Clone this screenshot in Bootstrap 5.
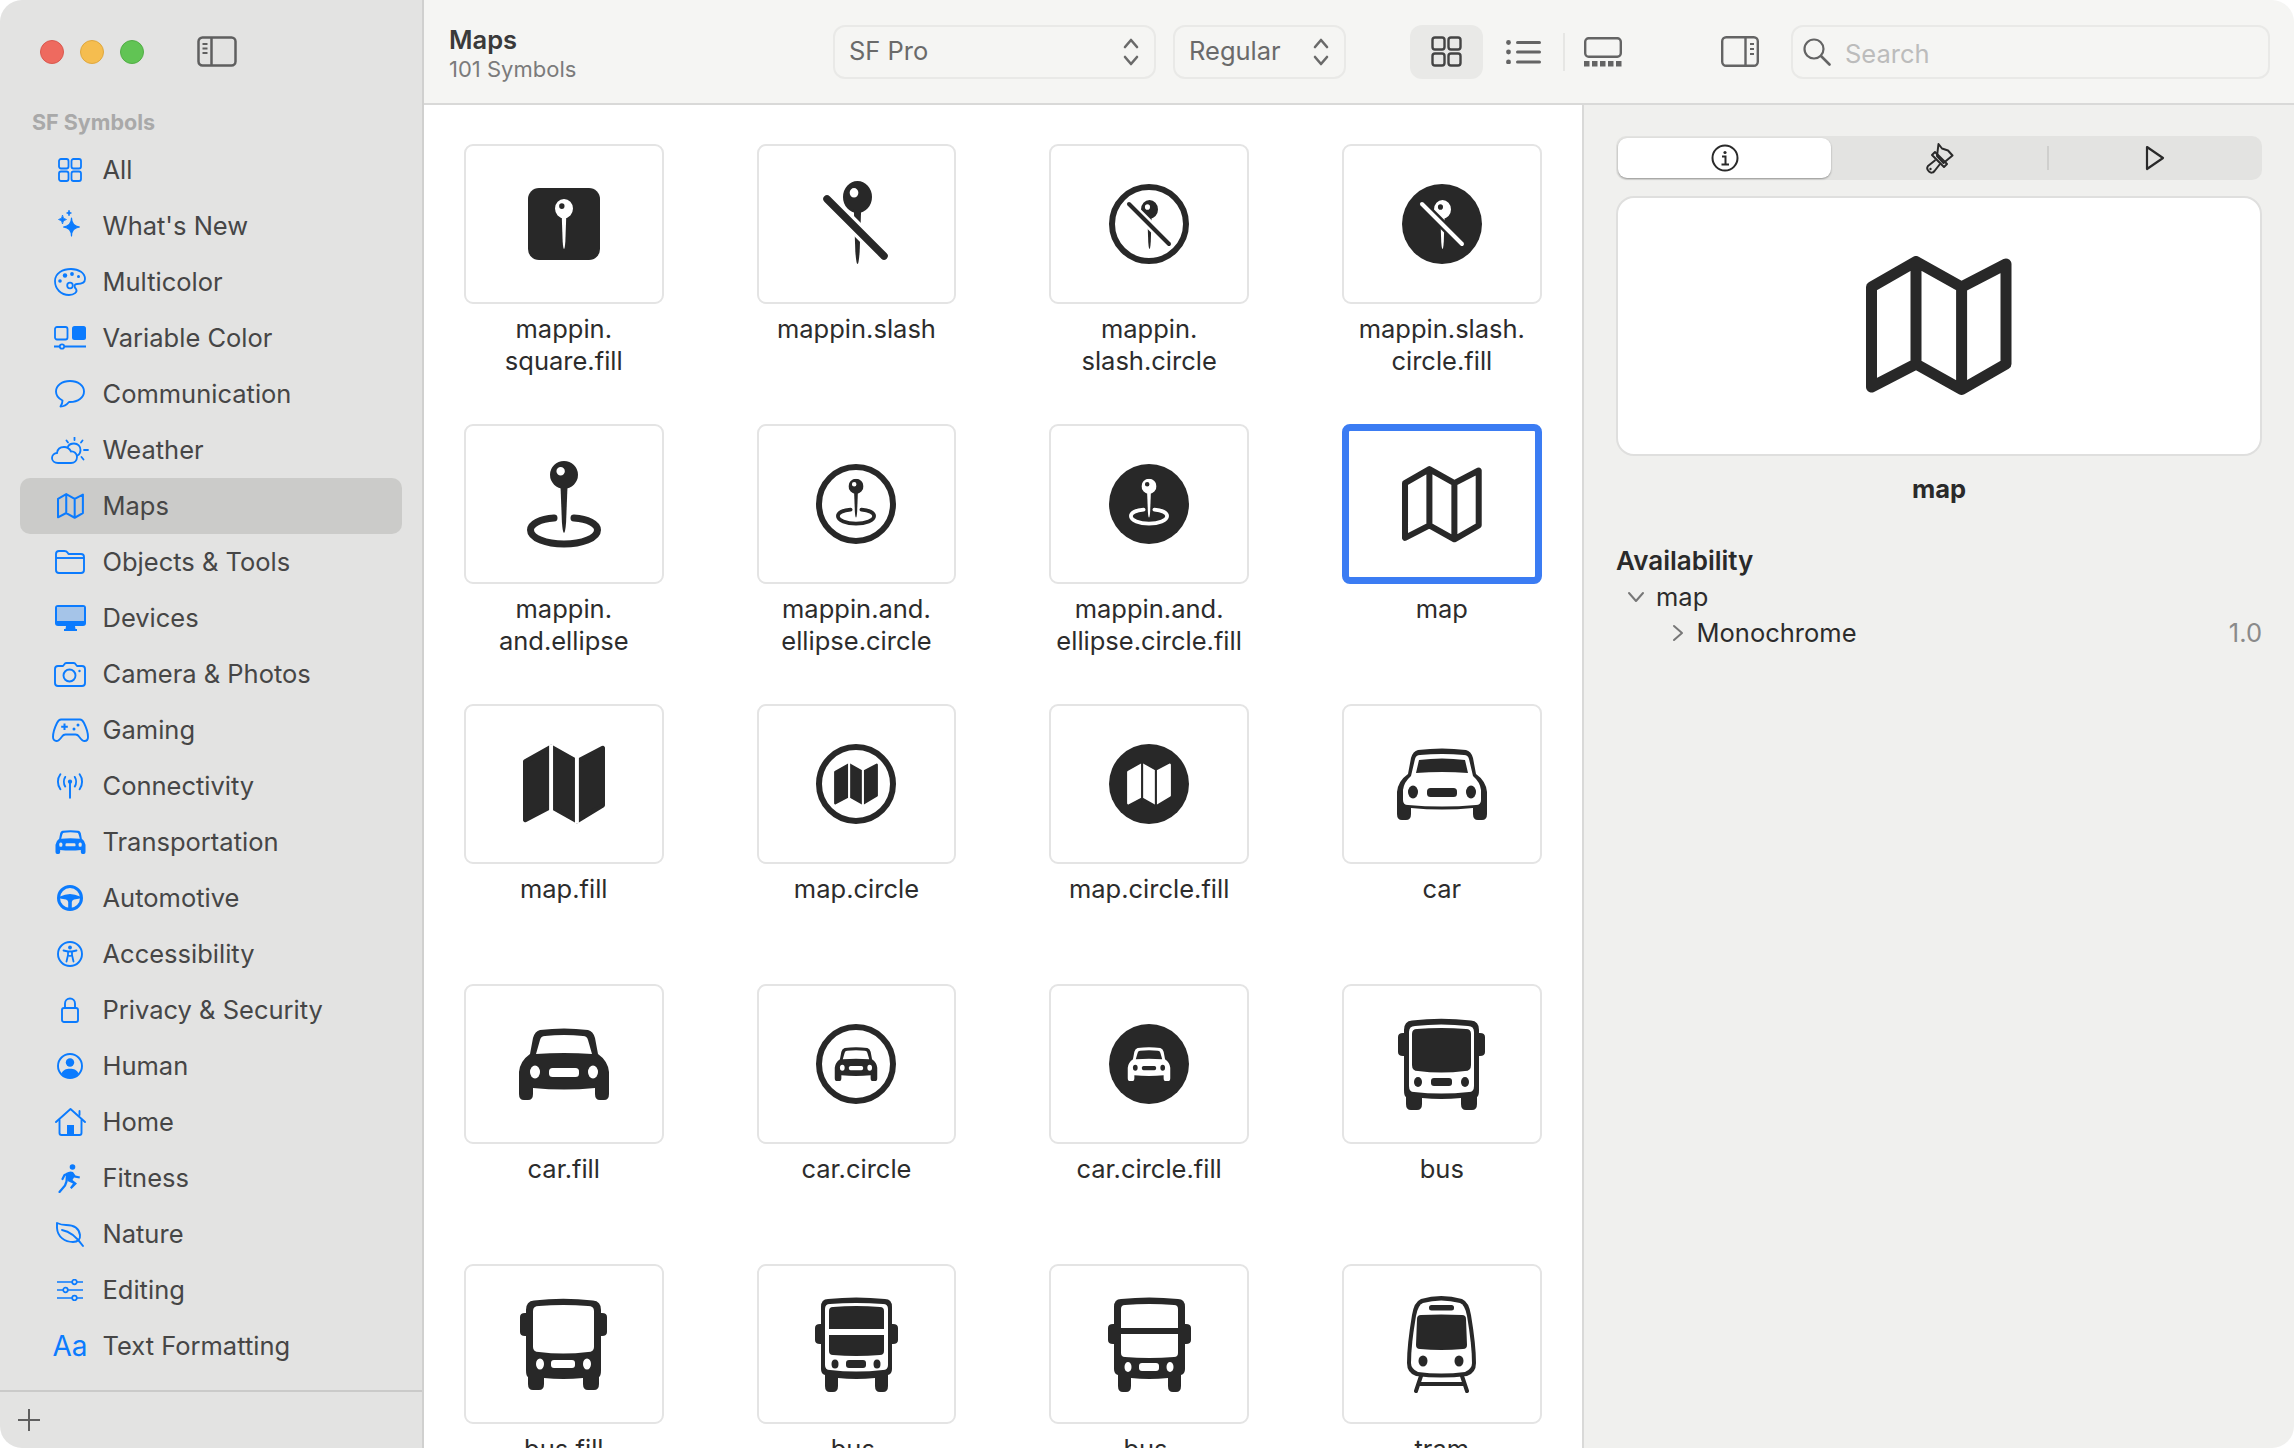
<!DOCTYPE html>
<html lang="en">

<head>
    <meta charset="UTF-8">
    <meta name="viewport" content="width=device-width, initial-scale=1.0">
    <title>SF Symbols</title>
    <!-- Bootstrap CSS -->
    <link href="https://cdn.jsdelivr.net/npm/bootstrap@5.3.0/dist/css/bootstrap.min.css" rel="stylesheet">
    <style>
        html, body { height: 100%; overflow: hidden; background: #fff; }
        body { font-family: Inter, "Liberation Sans", sans-serif; color: #2c2c2c; }
        svg { display: block; flex: none; }

        .app { height: 1448px; border-radius: 22px; overflow: hidden; background: #fff; }

        /* sidebar */
        .side { width: 424px; flex: none; background: #e3e3e2; border-right: 2px solid #d0d0cf; --gap: #e3e3e2; }
        .traffic { height: 104px; padding-left: 40px; gap: 16px; }
        .dot { width: 24px; height: 24px; border-radius: 50%; }
        .dot-r { background: #ee6a5f; border: 1px solid #d9594f; }
        .dot-y { background: #f5bd4f; border: 1px solid #dfa83f; }
        .dot-g { background: #61c454; border: 1px solid #52ae46; }
        .toggle-side { margin-left: 37px; color: #5f5f5f; }
        .side-title { font-size: 21.5px; font-weight: 700; color: #a9a9a9; line-height: 28px; margin: 4px 0 6px 32px; height: 28px; }
        .side .nav-link { display: flex; align-items: center; height: 56px; margin: 0 20px 0 20px; padding: 0 0 0 32px; font-size: 25.5px; color: #464646; border-radius: 10px; }
        .side .nav-link.active { background: #cbcbc9; }
        .side-ic { width: 36px; height: 32px; margin-right: 14.500px; color: #0b7bfe; flex: none; display: flex; align-items: center; justify-content: center; }
        .aa { font-size: 28px; line-height: 32px; }
        .side-foot { height: 58px; border-top: 2px solid #cacac9; padding-left: 18px; color: #5f5f5f; }

        /* toolbar */
        .toolbar { height: 105px; background: #f5f5f3; border-bottom: 2px solid #d9d9d8; padding: 0 25px 0 25px; }
        .tb-title { width: 384px; padding-top: 4px; }
        .tb-title b { display: block; font-size: 25.5px; line-height: 32px; font-weight: 600; color: #3a3a3a; }
        .tb-title span { display: block; font-size: 22px; line-height: 27px; color: #7b7b7b; }
        .picker { height: 54px; border: 2px solid #e9e9e7; border-radius: 12px; padding: 0 14px 0 14px; font-size: 25.5px; color: #6a6a6a; }
        .picker-font { width: 323px; }
        .picker-weight { width: 173px; margin-left: 17px; }
        .tb-view { width: 73px; height: 54px; border-radius: 12px; color: #555; }
        .tb-view.active { background: #e9e9e7; color: #444; }
        .tb-view.wide { width: 80px; }
        .tb-views { margin-left: 64px; }
        .tb-divider { width: 2px; height: 38px; background: #e6e6e4; }
        .tb-gallery { margin-left: 19px; }
        .tb-inspector { margin-left: 99px; }
        .search { height: 54px; width: 479px; margin-left: 32px; border: 2px solid #e9e9e7; border-radius: 12px; padding-left: 10px; font-size: 25.5px; color: #bcbcbc; }
        .search span { padding-top: 5px; margin-left: 14px; }
        .icon-gray { color: #646464; }

        /* symbols grid */
        .grid-wrap { width: 1158px; flex: none; background: #fff; overflow: hidden; padding: 39px 0 0 40px; }
        .sym-grid { display: grid; grid-template-columns: repeat(4, 199.500px); grid-auto-rows: 280px; column-gap: 93.200px; }
        .sym-card { height: 160px; border: 2px solid #e4e4e4; border-radius: 9px; align-items: center; justify-content: center; --gap: #fff; color: #282828; }
        .sym-card.selected { border: 7px solid #3b7cf3; border-radius: 8px; }
        .invert { color: #fff; --gap: #282828; }
        .sym-label { margin-top: 9px; font-size: 25.5px; line-height: 32px; text-align: center; color: #2c2c2c; }

        /* inspector */
        .inspector { flex: 1; background: #f0f0ee; border-left: 2px solid #d9d9d8; padding: 31px 33px 0 32px; --gap: #fff; }
        .segment { height: 44px; background: #e3e3e1; border-radius: 10px; border: 0; }
        .seg-btn { flex: 1; display: flex; align-items: center; justify-content: center; color: #2a2a2a; border-radius: 9px; position: relative; }
        .seg-btn.active { background: #fff; margin: 2px; box-shadow: 0 1px 2px rgba(0,0,0,.35); }
        .seg-sep { width: 2px; height: 24px; background: #cfcfcd; align-self: center; }
        .preview { height: 260px; margin-top: 16px; background: #fff; border: 2px solid #dfdfde; border-radius: 18px; align-items: center; justify-content: center; color: #282828; }
        .preview-name { margin: 17px 0 0; font-size: 25.5px; line-height: 32px; font-weight: 700; text-align: center; color: #2a2a2a; }
        .avail-head { margin: 40px 0 2px; font-size: 26px; line-height: 32px; font-weight: 600; color: #2a2a2a; }
        .tree-row { height: 36px; font-size: 25.5px; color: #2c2c2c; }
        .tree-map { padding-left: 11px; }
        .tree-mono { padding-left: 56px; }
        .tree-chev { width: 29px; flex: none; color: #777; }
        .tree-mono .tree-chev { width: 24.500px; }
        .version { color: #8a8a8a; }
    </style>
</head>

<body class="m-0">
    <!-- shared symbols -->
    <svg width="0" height="0" class="position-absolute">
        <defs>
            <symbol id="pin" viewBox="0 0 20 52" preserveAspectRatio="none">
                <path fill="currentColor" fill-rule="evenodd" d="M10 0a10 10 0 1 1 0 20a10 10 0 1 1 0-20zM7.600 4.400a3 3 0 1 0 0 6a3 3 0 1 0 0-6z"/>
                <path fill="currentColor" d="M7.500 18h5L11.500 44q-.6 8-1.500 8t-1.500-8z"/>
            </symbol>
            <symbol id="pinell" viewBox="0 0 100 100">
                <path fill="none" stroke="currentColor" stroke-width="7" stroke-linecap="round" d="M40 64C26 65 16.500 70 16.500 76C16.500 84 32 90 50 90S83.500 84 83.500 76C83.500 70 74 65 60 64"/>
                <use href="#pin" x="36" y="7" width="28" height="72"/>
            </symbol>
            <symbol id="map" viewBox="0 0 146 140">
                <path fill="none" stroke="currentColor" stroke-width="11" stroke-linejoin="round" d="M5.500 31L50 5.500L95.600 31L140 8V108L95.600 133.500L50 108L5.500 131ZM50 5.500V108M95.600 31V133.500"/>
            </symbol>
            <symbol id="mapf" viewBox="0 0 146 140">
                <path fill="currentColor" stroke="currentColor" stroke-width="8" stroke-linejoin="round" d="M4 30L50 4L96 30L142 6V108L96 136L50 110L4 134Z"/>
                <path stroke="var(--gap)" stroke-width="7" d="M50 0V140M96 0V140"/>
            </symbol>
            <symbol id="car" viewBox="0 0 92 72">
                <path fill="currentColor" d="M22 2Q46-1 70 2Q75 3 77 10L80 26Q90 33 91 44V66Q91 72 86 72H82Q77 72 77 66V60Q46 63 15 60V66Q15 72 10 72H6Q1 72 1 66V44Q2 33 12 26L15 10Q17 3 22 2Z"/>
                <path fill="var(--gap)" d="M7 42Q8 34 15 28L19 11Q20 7 24 7Q46 5 68 7Q72 7 73 11L77 28Q84 34 85 42V52Q85 57 80 57Q46 60 12 57Q7 57 7 52Z"/>
                <path fill="currentColor" d="M20 25L23 12Q46 9 69 12L72 25Q46 23 20 25Z"/>
                <ellipse fill="currentColor" cx="17" cy="44" rx="5" ry="6.500"/><ellipse fill="currentColor" cx="75" cy="44" rx="5" ry="6.500"/>
                <rect fill="currentColor" x="31" y="40" width="30" height="9" rx="3.500"/>
            </symbol>
            <symbol id="carf" viewBox="0 0 92 72">
                <path fill="currentColor" d="M22 2Q46-1 70 2Q75 3 77 10L80 26Q90 33 91 44V66Q91 72 86 72H82Q77 72 77 66V60Q46 63 15 60V66Q15 72 10 72H6Q1 72 1 66V44Q2 33 12 26L15 10Q17 3 22 2Z"/>
                <path fill="var(--gap)" d="M18 26L22 12Q23 8 27 8Q46 6 65 8Q69 8 70 12L74 26Q46 24 18 26Z"/>
                <ellipse fill="var(--gap)" cx="17" cy="44" rx="5" ry="6.500"/><ellipse fill="var(--gap)" cx="75" cy="44" rx="5" ry="6.500"/>
                <rect fill="var(--gap)" x="31" y="40" width="30" height="9" rx="3.500"/>
            </symbol>
            <symbol id="busbody" viewBox="0 0 87 92">
                <path fill="currentColor" d="M6 12Q6 3 14 2.500Q43-1 73 2.500Q81 3 81 12V15H82Q87 15 87 19V34Q87 38 82 38H81V72Q81 78 79 79V86Q79 92 74 92H68Q63 92 63 86V80Q43 82 24 80V86Q24 92 19 92H13Q8 92 8 86V79Q6 78 6 72V38H5Q0 38 0 34V19Q0 15 5 15H6Z"/>
            </symbol>
            <symbol id="bus" viewBox="0 0 87 92">
                <use href="#busbody" width="87" height="92"/>
                <path fill="var(--gap)" d="M11 14Q11 8 17 8Q43 5 70 8Q76 8 76 14V68Q76 74 71 74Q43 77 16 74Q11 74 11 68Z"/>
                <path fill="currentColor" d="M14 16Q14 11 19 11Q43 9 68 11Q73 11 73 16V47Q73 53 67 53Q43 56 20 53Q14 53 14 47Z"/>
                <ellipse fill="currentColor" cx="20" cy="64" rx="4" ry="5"/><ellipse fill="currentColor" cx="67" cy="64" rx="4" ry="5"/>
                <rect fill="currentColor" x="33" y="60" width="21" height="8" rx="3"/>
            </symbol>
            <symbol id="busf" viewBox="0 0 87 92">
                <use href="#busbody" width="87" height="92"/>
                <path fill="var(--gap)" d="M13 13Q13 8 19 8Q43 6 68 8Q74 8 74 13V49Q74 54 68 54Q43 57 19 54Q13 54 13 49Z"/>
                <ellipse fill="var(--gap)" cx="20" cy="66" rx="4" ry="5.500"/><ellipse fill="var(--gap)" cx="67" cy="66" rx="4" ry="5.500"/>
                <rect fill="var(--gap)" x="31" y="62" width="24" height="8" rx="3"/>
            </symbol>
            <symbol id="deck" viewBox="0 0 83 95">
                <path fill="currentColor" d="M6 10Q6 2 13 2Q41-1 70 2Q77 2 77 10V27H78Q83 27 83 31V43Q83 47 78 47H77V72Q77 77 73 78V89Q73 95 68 95H65Q60 95 60 89V81Q41 83 23 81V89Q23 95 18 95H15Q10 95 10 89V78Q6 77 6 72V47H5Q0 47 0 43V31Q0 27 5 27H6Z"/>
                <path fill="var(--gap)" d="M10 12Q10 7 15 7Q41 5 68 7Q73 7 73 12V68Q73 73 68 73Q41 76 15 73Q10 73 10 68Z"/>
                <path fill="currentColor" d="M14 14Q14 10 18 10Q41 8 65 10Q69 10 69 14V32H14ZM14 38H69V54Q69 58 65 58Q41 60 18 58Q14 58 14 54Z"/>
                <ellipse fill="currentColor" cx="20" cy="67" rx="3.500" ry="4.500"/><ellipse fill="currentColor" cx="62" cy="67" rx="3.500" ry="4.500"/>
                <rect fill="currentColor" x="31" y="63" width="20" height="8" rx="3"/>
            </symbol>
            <symbol id="deckf" viewBox="0 0 83 95">
                <path fill="currentColor" d="M6 10Q6 2 13 2Q41-1 70 2Q77 2 77 10V27H78Q83 27 83 31V43Q83 47 78 47H77V72Q77 77 73 78V89Q73 95 68 95H65Q60 95 60 89V81Q41 83 23 81V89Q23 95 18 95H15Q10 95 10 89V78Q6 77 6 72V47H5Q0 47 0 43V31Q0 27 5 27H6Z"/>
                <path fill="var(--gap)" d="M13 12Q13 8 17 8Q41 6 66 8Q70 8 70 12V31H13ZM13 37H70V56Q70 60 66 60Q41 62 17 60Q13 60 13 56Z"/>
                <ellipse fill="var(--gap)" cx="20" cy="70" rx="3.500" ry="5"/><ellipse fill="var(--gap)" cx="62" cy="70" rx="3.500" ry="5"/>
                <rect fill="var(--gap)" x="31" y="66" width="20" height="8" rx="3"/>
            </symbol>
            <symbol id="tram" viewBox="0 0 69 98">
                <path stroke="currentColor" stroke-width="4" stroke-linecap="round" fill="none" d="M15 78L9 96M54 78L60 96M13 89H56"/>
                <path fill="currentColor" d="M14 4Q34-2 55 4Q62 7 64 20Q69 50 69 68Q69 78 60 81Q34 84 9 81Q0 78 0 68Q0 50 5 20Q7 7 14 4Z"/>
                <path fill="var(--gap)" d="M16 8Q34 3 53 8Q58 10 60 21Q65 50 65 68Q65 74 58 77Q34 80 11 77Q4 74 4 68Q4 50 9 21Q11 10 16 8Z"/>
                <rect fill="currentColor" x="22" y="10" width="25" height="5.500" rx="2.500"/>
                <path fill="currentColor" d="M10 24Q10 20 14 20Q34 19 55 20Q59 20 59 24L60 50Q60 54 56 54Q34 56 13 54Q9 54 9 50Z"/>
                <ellipse fill="currentColor" cx="16" cy="66" rx="4.500" ry="5.500"/><ellipse fill="currentColor" cx="52" cy="66" rx="4.500" ry="5.500"/>
            </symbol>
        </defs>
    </svg>

    <div class="app d-flex">
        <!-- sidebar -->
        <aside class="side d-flex flex-column">
            <div class="traffic d-flex align-items-center">
                <span class="dot dot-r"></span>
                <span class="dot dot-y"></span>
                <span class="dot dot-g"></span>
                <svg class="toggle-side" width="40" height="32" viewBox="0 0 40 32" fill="none" stroke="currentColor" stroke-width="2.500"><rect x="1.500" y="1.500" width="37" height="28" rx="4"/><path d="M14.500 1.500V29.500"/><path d="M5.500 8H10.500M5.500 12.500H10.500M5.500 17H10.500" stroke-width="2"/></svg>
            </div>
            <div class="side-title">SF Symbols</div>
            <nav class="nav flex-column flex-grow-1 flex-nowrap">
                <a class="nav-link" href="#"><span class="side-ic"><svg width="24" height="24" viewBox="0 0 24 24" fill="none" stroke="currentColor" stroke-width="1.800"><rect x="1" y="1" width="9.500" height="9.500" rx="2"/><rect x="13.500" y="1" width="9.500" height="9.500" rx="2"/><rect x="1" y="13.500" width="9.500" height="9.500" rx="2"/><rect x="13.500" y="13.500" width="9.500" height="9.500" rx="2"/></svg></span>All</a>
                <a class="nav-link" href="#"><span class="side-ic"><svg width="32" height="32" viewBox="0 0 32 32" fill="currentColor"><path d="M17.500 8Q17.500 16 25.500 17Q17.500 18 17.500 26Q17.500 18 9.500 17Q17.500 16 17.500 8Z" stroke="currentColor" stroke-width="1.200" stroke-linejoin="round"/><path d="M8.500 5Q8.500 9 12.500 9.500Q8.500 10 8.500 14Q8.500 10 4.500 9.500Q8.500 9 8.500 5Z" stroke="currentColor" stroke-width=".8"/><path d="M15 0Q15 2.500 17.500 3Q15 3.500 15 6Q15 3.500 12.500 3Q15 2.500 15 0Z" stroke="currentColor" stroke-width=".6"/></svg></span>What's New</a>
                <a class="nav-link" href="#"><span class="side-ic"><svg width="32" height="28" viewBox="0 0 32 28" fill="none" stroke="currentColor" stroke-width="1.800"><path d="M1 13C1 5 9 1 17 1C25 1 31 5 31 11C31 15 27 16 23 16C20 16 20 19 22 21C24 24 20 27 15 27C7 27 1 21 1 13Z"/><circle cx="16" cy="17.500" r="2.800"/><g fill="currentColor" stroke="none"><circle cx="6" cy="13" r="1.800"/><circle cx="11" cy="7.500" r="2.200"/><circle cx="18" cy="6" r="1.900"/><circle cx="24.500" cy="8.500" r="1.500"/></g></svg></span>Multicolor</a>
                <a class="nav-link" href="#"><span class="side-ic"><svg width="32" height="24" viewBox="0 0 32 24" fill="none" stroke="currentColor" stroke-width="1.800"><rect x="1" y="1" width="12.500" height="12.500" rx="2"/><rect x="18" y="0" width="14" height="14" rx="2.500" fill="currentColor" stroke="none"/><path d="M0 20.500H6M11 20.500H32"/><circle cx="8" cy="20.500" r="2.200"/></svg></span>Variable Color</a>
                <a class="nav-link" href="#"><span class="side-ic"><svg width="30" height="28" viewBox="0 0 30 28" fill="none" stroke="currentColor" stroke-width="1.900" stroke-linejoin="round"><path d="M15 1C7 1 1 5.500 1 11.500C1 15.500 3.500 18.500 7.500 20.500C7.500 23 6.500 25 5.500 26.500C9 26.500 12 24.500 14 22C14.500 22 15 22 15 22C23 22 29 17.500 29 11.500C29 5.500 23 1 15 1Z"/></svg></span>Communication</a>
                <a class="nav-link" href="#"><span class="side-ic"><svg width="38" height="27" viewBox="0 0 38 27" fill="none" stroke="currentColor" stroke-width="1.800" stroke-linecap="round"><path d="M7 26C3.500 26 1 24 1 21C1 18 3.500 16 6 16C6.500 12 9.500 10 13 10C16 10 18.500 11.500 20 14.500C23 14 26 16.500 26 20C26 23.500 23.500 26 20 26Z"/><path d="M17 9.500C18 7.500 20 6.500 23 6.500C27 6.500 29.500 9.500 29.500 13C29.500 15.500 28.500 17.500 26.500 18.500"/><path d="M23.500 0.500V3M15.500 3.500L17 5.500M31.500 3.500L30 5.500M33 13H37M30.500 20L32.500 22.500"/></svg></span>Weather</a>
                <a class="nav-link active" href="#"><span class="side-ic"><svg width="27" height="26"><use href="#map" width="27" height="26"/></svg></span>Maps</a>
                <a class="nav-link" href="#"><span class="side-ic"><svg width="30" height="24" viewBox="0 0 30 24" fill="none" stroke="currentColor" stroke-width="1.900" stroke-linejoin="round"><path d="M1 4Q1 1 4 1H9.500Q11.500 1 12.500 2.500L13.500 4H26Q29 4 29 7V20Q29 23 26 23H4Q1 23 1 20Z"/><path d="M1 8H29"/></svg></span>Objects &amp; Tools</a>
                <a class="nav-link" href="#"><span class="side-ic"><svg width="31" height="26" viewBox="0 0 31 26"><rect x="0" y="0" width="31" height="21" rx="3" fill="currentColor"/><rect x="2" y="2" width="27" height="14" fill="#a5c4e8"/><path d="M11 21H20L20.500 24H22V26H9V24H10.500Z" fill="currentColor"/></svg></span>Devices</a>
                <a class="nav-link" href="#"><span class="side-ic"><svg width="32" height="25" viewBox="0 0 32 25" fill="none" stroke="currentColor" stroke-width="1.900" stroke-linejoin="round"><path d="M1 7Q1 4 4 4H9L11 1.500Q11.500 1 12.500 1H19.500Q20.500 1 21 1.500L23 4H28Q31 4 31 7V21Q31 24 28 24H4Q1 24 1 21Z"/><circle cx="15.500" cy="13.500" r="6"/><circle cx="25.500" cy="9" r="1.200" fill="currentColor" stroke="none"/></svg></span>Camera &amp; Photos</a>
                <a class="nav-link" href="#"><span class="side-ic"><svg width="37" height="24" viewBox="0 0 37 24" fill="none" stroke="currentColor" stroke-width="1.900" stroke-linejoin="round"><path d="M9 1.500H28C30 1.500 31 3 32 5C34 9 36 15 36 19C36 21.500 34.500 23 32.500 23C30 23 28.500 20.500 27 18.500C26 17 25 16.500 23.500 16.500H13.500C12 16.500 11 17 10 18.500C8.500 20.500 7 23 4.500 23C2.500 23 1 21.500 1 19C1 15 3 9 5 5C6 3 7 1.500 9 1.500Z"/><path d="M12.500 5.500V12M9.200 8.800H15.800" stroke-width="2"/><circle cx="22" cy="11" r="1.500" fill="currentColor" stroke="none"/><circle cx="26" cy="7" r="1.500" fill="currentColor" stroke="none"/></svg></span>Gaming</a>
                <a class="nav-link" href="#"><span class="side-ic"><svg width="30" height="26" viewBox="0 0 28 24" fill="none" stroke="currentColor" stroke-width="1.800" stroke-linecap="round"><path d="M5 1C2 5 2 11 5 15M9.500 3.500C8 6 8 10 9.500 12.500M18.500 3.500C20 6 20 10 18.500 12.500M23 1C26 5 26 11 23 15"/><circle cx="14" cy="8" r="2" fill="currentColor" stroke="none"/><path d="M14 9V23"/></svg></span>Connectivity</a>
                <a class="nav-link" href="#"><span class="side-ic"><svg width="31" height="24"><use href="#carf" width="31" height="24"/></svg></span>Transportation</a>
                <a class="nav-link" href="#"><span class="side-ic"><svg width="26" height="26" viewBox="0 0 26 26" fill="none" stroke="currentColor"><circle cx="13" cy="13" r="11.500" stroke-width="3"/><path fill="currentColor" stroke="none" d="M3 11.500Q13 6.500 23 11.500V13.500L17 14.500Q15 15 14.800 17L14.800 24H11.200L11.200 17Q11 15 9 14.500L3 13.500Z"/><circle cx="13" cy="13" r="2" fill="currentColor" stroke="none"/></svg></span>Automotive</a>
                <a class="nav-link" href="#"><span class="side-ic"><svg width="26" height="26" viewBox="0 0 26 26" fill="none" stroke="currentColor"><circle cx="13" cy="13" r="12" stroke-width="1.900"/><circle cx="13" cy="6.500" r="1.900" fill="currentColor" stroke="none"/><path d="M6.500 9.500L11 10.500V14L9.500 20.500M19.500 9.500L15 10.500V14L16.500 20.500M11 10.500H15M11 14.500L13 15L15 14.500" stroke-width="1.800" stroke-linecap="round" stroke-linejoin="round"/></svg></span>Accessibility</a>
                <a class="nav-link" href="#"><span class="side-ic"><svg width="18" height="26" viewBox="0 0 18 26" fill="none" stroke="currentColor" stroke-width="1.900"><rect x="1" y="11" width="16" height="14" rx="2"/><path d="M4 11V6.500A5 5 0 0 1 14 6.500V11"/></svg></span>Privacy &amp; Security</a>
                <a class="nav-link" href="#"><span class="side-ic"><svg width="26" height="26" viewBox="0 0 26 26" fill="none" stroke="currentColor"><circle cx="13" cy="13" r="12" stroke-width="1.900"/><circle cx="13" cy="9.500" r="4.200" fill="currentColor" stroke="none"/><path fill="currentColor" stroke="none" d="M4.500 20.500C6 17 9 15.800 13 15.800C17 15.800 20 17 21.500 20.500C19.500 23.500 16.500 25 13 25C9.500 25 6.500 23.500 4.500 20.500Z"/></svg></span>Human</a>
                <a class="nav-link" href="#"><span class="side-ic"><svg width="31" height="28" viewBox="0 0 31 28" fill="none" stroke="currentColor" stroke-width="1.900" stroke-linecap="round" stroke-linejoin="round"><path d="M1 14L15.500 1L30 14"/><path d="M24.500 3V7"/><path d="M4.500 12V25Q4.500 27 6.500 27H24.500Q26.500 27 26.500 25V12"/><rect x="12" y="17" width="7" height="10" fill="currentColor" stroke="none"/></svg></span>Home</a>
                <a class="nav-link" href="#"><span class="side-ic"><svg width="24" height="29" viewBox="0 0 24 29" fill="currentColor"><circle cx="14.500" cy="3" r="2.800"/><path d="M1.500 28L7 21.500L8.500 17.500L9 10L6.500 11L4.500 15" fill="none" stroke="currentColor" stroke-width="2.200" stroke-linecap="round" stroke-linejoin="round"/><path d="M8 9Q12 6.500 15 8L17.500 11.500L22 12.500L21.500 14.500L16 13.500L14.500 16L19 19.500L13.500 25L12 23.500L15 19.500L9.500 17Z"/></svg></span>Fitness</a>
                <a class="nav-link" href="#"><span class="side-ic"><svg width="28" height="25" viewBox="0 0 28 25" fill="none" stroke="currentColor" stroke-width="1.900" stroke-linecap="round" stroke-linejoin="round"><path d="M1 1C2 1.500 5 3 10 3C18 3 23 6 24 13C24.500 17 22 20 17 20C9 20 1.500 15 1 6Z"/><path d="M6 8C12 9 20 14 27 24" /></svg></span>Nature</a>
                <a class="nav-link" href="#"><span class="side-ic"><svg width="26" height="22" viewBox="0 0 26 22" fill="none" stroke="currentColor" stroke-width="1.700"><path d="M0 3H15M20 3H26M0 11H6M11 11H26M0 19H15M20 19H26"/><circle cx="17.500" cy="3" r="2.300"/><circle cx="8.500" cy="11" r="2.300"/><circle cx="17.500" cy="19" r="2.300"/></svg></span>Editing</a>
                <a class="nav-link" href="#"><span class="side-ic aa">Aa</span>Text Formatting</a>
            </nav>
            <div class="side-foot d-flex align-items-center">
                <svg width="22" height="22" viewBox="0 0 22 22" stroke="currentColor" stroke-width="2"><path d="M11 0V22M0 11H22"/></svg>
            </div>
        </aside>

        <div class="flex-grow-1 d-flex flex-column">
            <!-- toolbar -->
            <header class="toolbar d-flex align-items-center flex-shrink-0">
                <div class="tb-title">
                    <b>Maps</b>
                    <span>101 Symbols</span>
                </div>
                <div class="picker picker-font d-flex align-items-center justify-content-between"><span>SF Pro</span>
                    <svg width="18" height="28" viewBox="0 0 18 28" fill="none" stroke="currentColor" stroke-width="2.600" stroke-linecap="round" stroke-linejoin="round"><path d="M3 9L9 2L15 9M3 19L9 26L15 19"/></svg>
                </div>
                <div class="picker picker-weight d-flex align-items-center justify-content-between"><span>Regular</span>
                    <svg width="18" height="28" viewBox="0 0 18 28" fill="none" stroke="currentColor" stroke-width="2.600" stroke-linecap="round" stroke-linejoin="round"><path d="M3 9L9 2L15 9M3 19L9 26L15 19"/></svg>
                </div>
                <div class="tb-views d-flex align-items-center">
                    <div class="tb-view active d-flex align-items-center justify-content-center">
                        <svg width="31" height="31" viewBox="0 0 31 31" fill="none" stroke="currentColor" stroke-width="2.400"><rect x="1.500" y="1.500" width="12" height="12" rx="2.500"/><rect x="17.500" y="1.500" width="12" height="12" rx="2.500"/><rect x="1.500" y="17.500" width="12" height="12" rx="2.500"/><rect x="17.500" y="17.500" width="12" height="12" rx="2.500"/></svg>
                    </div>
                    <div class="tb-view wide d-flex align-items-center justify-content-center icon-gray">
                        <svg width="35" height="24" viewBox="0 0 35 24" fill="currentColor"><circle cx="2.500" cy="2.500" r="2.400"/><circle cx="2.500" cy="12" r="2.400"/><circle cx="2.500" cy="22" r="2.400"/><rect x="10" y="1" width="25" height="3" rx="1.500"/><rect x="10" y="10.500" width="25" height="3" rx="1.500"/><rect x="10" y="20.500" width="25" height="3" rx="1.500"/></svg>
                    </div>
                    <div class="tb-divider"></div>
                    <div class="tb-gallery icon-gray">
                        <svg width="38" height="30" viewBox="0 0 38 30" fill="currentColor"><rect x="1.200" y="1.200" width="35.600" height="18.600" rx="3.500" fill="none" stroke="currentColor" stroke-width="2.400"/><rect x="0" y="24" width="5.500" height="5.500"/><rect x="8" y="24" width="5.500" height="5.500"/><rect x="16" y="24" width="5.500" height="5.500"/><rect x="24" y="24" width="5.500" height="5.500"/><rect x="32" y="24" width="5.500" height="5.500"/></svg>
                    </div>
                </div>
                <div class="icon-gray tb-inspector">
                    <svg width="38" height="31" viewBox="0 0 38 31" fill="none" stroke="currentColor" stroke-width="2.400"><rect x="1.200" y="1.200" width="35.600" height="28.600" rx="4"/><path d="M24.500 1.200V29.800"/><path d="M29 8H33M29 13H33M29 18H33" stroke-width="2"/></svg>
                </div>
                <div class="search d-flex align-items-center">
                    <svg class="icon-gray" width="28" height="28" viewBox="0 0 28 28" fill="none" stroke="currentColor" stroke-width="2.200" stroke-linecap="round"><circle cx="11" cy="11" r="9.500"/><path d="M18 18L26.500 26.500" stroke-width="2.600"/></svg>
                    <span>Search</span>
                </div>
            </header>

            <div class="d-flex flex-grow-1 overflow-hidden">
                <!-- symbols -->
                <main class="grid-wrap">
                    <div class="sym-grid">
                        <div>
                            <div class="card sym-card flex-row">
                                <svg width="100" height="100"><rect x="14" y="14" width="72" height="72" rx="11" fill="currentColor"/><use href="#pin" class="invert" x="41" y="25" width="18" height="50"/></svg>
                            </div>
                            <div class="sym-label">mappin.<br>square.fill</div>
                        </div>
                        <div>
                            <div class="card sym-card flex-row">
                                <svg width="100" height="100"><use href="#pin" x="37" y="7" width="29" height="83"/><path d="M21 25L78 82" stroke="#fff" stroke-width="14"/><path d="M21 25L78 82" stroke="currentColor" stroke-width="7.500" stroke-linecap="round"/></svg>
                            </div>
                            <div class="sym-label">mappin.slash</div>
                        </div>
                        <div>
                            <div class="card sym-card flex-row">
                                <svg width="100" height="100"><circle cx="50" cy="50" r="37" fill="none" stroke="currentColor" stroke-width="6"/><use href="#pin" x="42" y="26" width="17" height="49"/><path d="M30 30L70 70" stroke="#fff" stroke-width="9"/><path d="M30 30L70 70" stroke="currentColor" stroke-width="4" stroke-linecap="round"/></svg>
                            </div>
                            <div class="sym-label">mappin.<br>slash.circle</div>
                        </div>
                        <div>
                            <div class="card sym-card flex-row">
                                <svg width="100" height="100"><circle cx="50" cy="50" r="40" fill="currentColor"/><use href="#pin" class="invert" x="42" y="26" width="17" height="49"/><path d="M30 30L70 70" stroke="currentColor" stroke-width="9"/><path d="M30 30L70 70" stroke="#fff" stroke-width="4" stroke-linecap="round"/></svg>
                            </div>
                            <div class="sym-label">mappin.slash.<br>circle.fill</div>
                        </div>

                        <div>
                            <div class="card sym-card flex-row">
                                <svg width="100" height="100"><use href="#pinell" width="100" height="100"/></svg>
                            </div>
                            <div class="sym-label">mappin.<br>and.ellipse</div>
                        </div>
                        <div>
                            <div class="card sym-card flex-row">
                                <svg width="100" height="100"><circle cx="50" cy="50" r="37" fill="none" stroke="currentColor" stroke-width="6"/><use href="#pinell" x="23" y="21" width="54" height="54"/></svg>
                            </div>
                            <div class="sym-label">mappin.and.<br>ellipse.circle</div>
                        </div>
                        <div>
                            <div class="card sym-card flex-row">
                                <svg width="100" height="100"><circle cx="50" cy="50" r="40" fill="currentColor"/><use href="#pinell" class="invert" x="23" y="21" width="54" height="54"/></svg>
                            </div>
                            <div class="sym-label">mappin.and.<br>ellipse.circle.fill</div>
                        </div>
                        <div>
                            <div class="card sym-card selected flex-row">
                                <svg width="80" height="77"><use href="#map" width="80" height="77"/></svg>
                            </div>
                            <div class="sym-label">map</div>
                        </div>

                        <div>
                            <div class="card sym-card flex-row">
                                <svg width="82" height="80"><use href="#mapf" width="82" height="80"/></svg>
                            </div>
                            <div class="sym-label">map.fill</div>
                        </div>
                        <div>
                            <div class="card sym-card flex-row">
                                <svg width="100" height="100"><circle cx="50" cy="50" r="37" fill="none" stroke="currentColor" stroke-width="6"/><use href="#mapf" x="28" y="29" width="44" height="42"/></svg>
                            </div>
                            <div class="sym-label">map.circle</div>
                        </div>
                        <div>
                            <div class="card sym-card flex-row">
                                <svg width="100" height="100"><circle cx="50" cy="50" r="40" fill="currentColor"/><use href="#mapf" class="invert" x="28" y="29" width="44" height="42"/></svg>
                            </div>
                            <div class="sym-label">map.circle.fill</div>
                        </div>
                        <div>
                            <div class="card sym-card flex-row">
                                <svg width="92" height="72"><use href="#car" width="92" height="72"/></svg>
                            </div>
                            <div class="sym-label">car</div>
                        </div>

                        <div>
                            <div class="card sym-card flex-row">
                                <svg width="92" height="72"><use href="#carf" width="92" height="72"/></svg>
                            </div>
                            <div class="sym-label">car.fill</div>
                        </div>
                        <div>
                            <div class="card sym-card flex-row">
                                <svg width="100" height="100"><circle cx="50" cy="50" r="37" fill="none" stroke="currentColor" stroke-width="6"/><use href="#carf" x="28" y="33" width="44" height="34"/></svg>
                            </div>
                            <div class="sym-label">car.circle</div>
                        </div>
                        <div>
                            <div class="card sym-card flex-row">
                                <svg width="100" height="100"><circle cx="50" cy="50" r="40" fill="currentColor"/><use href="#carf" class="invert" x="28" y="33" width="44" height="34"/></svg>
                            </div>
                            <div class="sym-label">car.circle.fill</div>
                        </div>
                        <div>
                            <div class="card sym-card flex-row">
                                <svg width="87" height="92"><use href="#bus" width="87" height="92"/></svg>
                            </div>
                            <div class="sym-label">bus</div>
                        </div>

                        <div>
                            <div class="card sym-card flex-row">
                                <svg width="87" height="92"><use href="#busf" width="87" height="92"/></svg>
                            </div>
                            <div class="sym-label">bus.fill</div>
                        </div>
                        <div>
                            <div class="card sym-card flex-row">
                                <svg width="83" height="95"><use href="#deck" width="83" height="95"/></svg>
                            </div>
                            <div class="sym-label">bus.</div>
                        </div>
                        <div>
                            <div class="card sym-card flex-row">
                                <svg width="83" height="95"><use href="#deckf" width="83" height="95"/></svg>
                            </div>
                            <div class="sym-label">bus.</div>
                        </div>
                        <div>
                            <div class="card sym-card flex-row">
                                <svg width="69" height="98"><use href="#tram" width="69" height="98"/></svg>
                            </div>
                            <div class="sym-label">tram</div>
                        </div>
                    </div>
                </main>

                <!-- inspector -->
                <section class="inspector">
                    <div class="segment d-flex">
                        <div class="seg-btn active">
                            <svg width="28" height="28" viewBox="0 0 28 28" fill="none" stroke="currentColor" stroke-width="2"><circle cx="14" cy="14" r="12.500"/><circle cx="14" cy="8.500" r="1.600" fill="currentColor" stroke="none"/><path d="M11 12.500H14.500V20M10.500 20.500H18"/></svg>
                        </div>
                        <div class="seg-btn">
                            <svg width="28" height="31" viewBox="0 0 28 31" fill="none" stroke="currentColor" stroke-width="2" stroke-linejoin="round"><path d="M12.500 1L16 5.500L19 6.500L22 7.500L26.500 12.500L17.500 20L11 13Z"/><path d="M6 12L9 9L21 21L18 24Z"/><path d="M9.500 17L2 23Q0 26 3 28.500Q6 31 8.500 28L14 21"/><circle cx="4.500" cy="26" r="1.200" fill="currentColor" stroke="none"/></svg>
                        </div>
                        <div class="seg-sep"></div>
                        <div class="seg-btn">
                            <svg width="20" height="26" viewBox="0 0 20 26" fill="none" stroke="currentColor" stroke-width="2.200" stroke-linejoin="round"><path d="M2 2L18 13L2 24Z"/></svg>
                        </div>
                    </div>
                    <div class="card preview flex-row">
                        <svg width="146" height="140"><use href="#map" width="146" height="140"/></svg>
                    </div>
                    <p class="preview-name">map</p>
                    <h6 class="avail-head">Availability</h6>
                    <div class="tree-row tree-map d-flex align-items-center">
                        <span class="tree-chev"><svg width="18" height="12" viewBox="0 0 18 12" fill="none" stroke="currentColor" stroke-width="2" stroke-linecap="round" stroke-linejoin="round"><path d="M2 2L9 10L16 2"/></svg></span>
                        <span>map</span>
                    </div>
                    <div class="tree-row tree-mono d-flex align-items-center">
                        <span class="tree-chev"><svg width="12" height="18" viewBox="0 0 12 18" fill="none" stroke="currentColor" stroke-width="2" stroke-linecap="round" stroke-linejoin="round"><path d="M2 2L10 9L2 16"/></svg></span>
                        <span>Monochrome</span>
                        <span class="ms-auto version">1.0</span>
                    </div>
                </section>
            </div>
        </div>
    </div>

    <!-- Bootstrap JS -->
    <script src="https://cdn.jsdelivr.net/npm/bootstrap@5.3.0/dist/js/bootstrap.bundle.min.js"></script>
</body>

</html>
